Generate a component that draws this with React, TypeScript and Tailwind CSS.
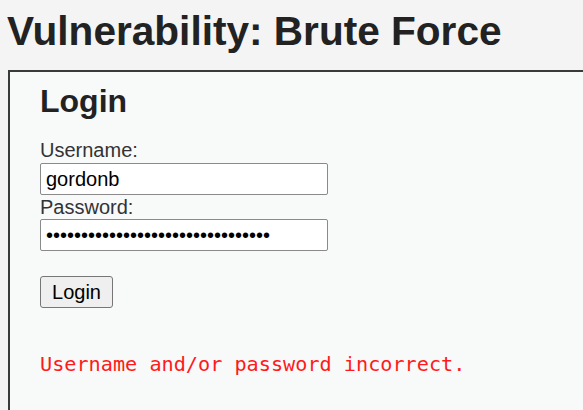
import React from "react";

const App: React.FC = () => {
  return (
    <div className="min-h-screen overflow-hidden bg-[#f4f4f4] font-['Liberation_Sans',Arial,sans-serif] text-[#222]">
      <h1 className="pl-[7px] pt-[8px] text-[40.6px] font-bold leading-[46px] text-[#222]">
        Vulnerability: Brute Force
      </h1>
      <div className="ml-[8px] mt-[16px] h-[360px] w-[600px] border-2 border-[#3a3a3a] bg-[#f8f9f9] pl-[30px] pt-[11px]">
        <h2 className="text-[32px] font-bold leading-[37px] text-[#222]">Login</h2>
        <form className="mt-[19px] flex flex-col items-start" onSubmit={(e) => e.preventDefault()}>
          <label className="text-[20px] leading-[23px] text-[#333]">Username:</label>
          <input
            type="text"
            defaultValue="gordonb"
            className="mt-[1px] h-[32px] w-[288px] rounded-[2px] border border-[#8a8a8a] bg-white px-[5px] text-[20px] text-black outline-none"
          />
          <label className="mt-[1px] text-[20px] leading-[23px] text-[#333]">Password:</label>
          <input
            type="password"
            defaultValue="passwordpasswordpasswordpassword"
            className="h-[32px] w-[288px] rounded-[2px] border border-[#8a8a8a] bg-white px-[5px] text-[20px] text-black outline-none"
          />
          <button
            type="submit"
            className="mt-[25px] h-[32px] w-[73px] rounded-[3px] border-[1.5px] border-[#767676] bg-[#efefef] text-[20px] leading-none text-black"
          >
            Login
          </button>
        </form>
        <pre className="mt-[45px] font-['DejaVu_Sans_Mono',monospace] text-[20.2px] leading-[23px] text-[#ff1a1a]">
          Username and/or password incorrect.
        </pre>
      </div>
    </div>
  );
};

export default App;
